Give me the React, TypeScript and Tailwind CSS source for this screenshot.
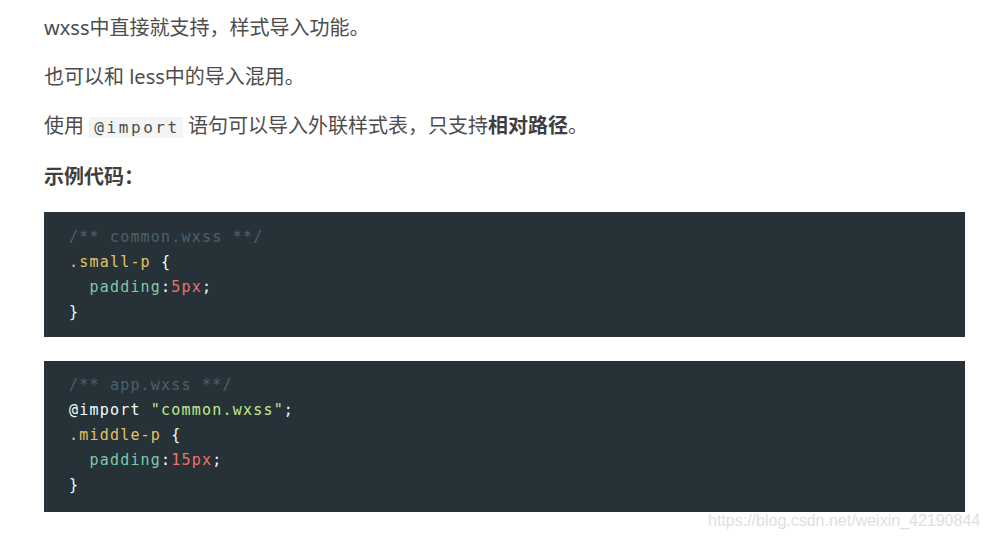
import React from "react";

const body = { fontFamily: '"Noto Sans", "Noto Sans CJK SC", sans-serif' };
const mono = { fontFamily: '"DejaVu Sans Mono", "Liberation Mono", monospace' };

export default function App() {
  return (
    <div className="w-[989px] h-[538px] bg-white relative overflow-hidden">
      <div className="pl-[44px] pr-[24px] pt-[13px]" style={body}>
        <p className="text-[20px] leading-[30px] text-[#4d4d4d]">wxss中直接就支持，样式导入功能。</p>
        <p className="mt-[19px] text-[20px] leading-[30px] text-[#4d4d4d]">也可以和 less中的导入混用。</p>
        <p className="mt-[19px] text-[20px] leading-[30px] text-[#4d4d4d]">
          使用{" "}
          <code className="bg-[#f3f4f4] pl-[5px] pr-[3px] py-[1px] text-[16px] tracking-[2.6px] text-[#4d4d4d]" style={mono}>@import</code>{" "}
          语句可以导入外联样式表，只支持<strong className="font-bold text-[#3f3f3f]">相对路径</strong>。
        </p>
        <p className="mt-[19px] text-[20px] leading-[30px] text-[#3f3f3f] font-bold">示例代码：</p>
        <pre
          className="mt-[20px] w-[921px] bg-[#263238] pl-[25px] pt-[13px] pb-[12px] text-[15px] leading-[25px] tracking-[1.2px] text-[#eeffff]"
          style={mono}
        >
          <div className="text-[#4a6170]">/** common.wxss **/</div>
          <div><span className="text-[#e2c25f]">.small-p</span> {"{"}</div>
          <div>  <span className="text-[#7fc8a9]">padding</span>:<span className="text-[#f07168]">5px</span>;</div>
          <div>{"}"}</div>
        </pre>
        <pre
          className="mt-[24px] w-[921px] bg-[#263238] pl-[25px] pt-[12px] pb-[14px] text-[15px] leading-[25px] tracking-[1.2px] text-[#eeffff]"
          style={mono}
        >
          <div className="text-[#4a6170]">/** app.wxss **/</div>
          <div>@import <span className="text-[#c3e88d]">"common.wxss"</span>;</div>
          <div><span className="text-[#e2c25f]">.middle-p</span> {"{"}</div>
          <div>  <span className="text-[#7fc8a9]">padding</span>:<span className="text-[#f07168]">15px</span>;</div>
          <div>{"}"}</div>
        </pre>
      </div>
      <div
        className="absolute left-[708px] top-[509px] text-[16px] text-[#e0e0e0]"
        style={{ fontFamily: '"Liberation Sans", Arial, sans-serif' }}
      >
        https://blog.csdn.net/weixin_42190844
      </div>
    </div>
  );
}
